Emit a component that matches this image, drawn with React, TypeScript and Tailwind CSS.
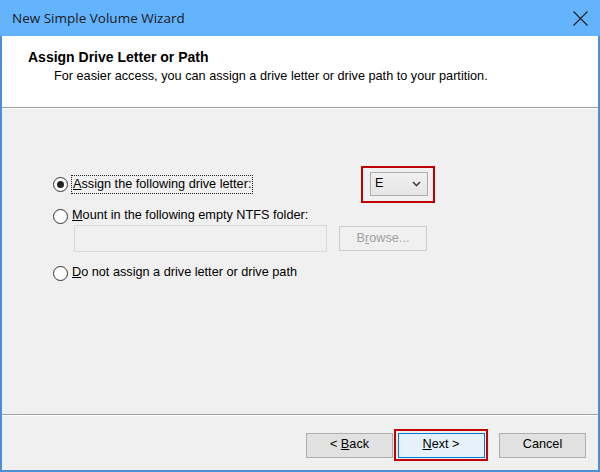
import React from "react";

const body = { fontFamily: '"Liberation Sans", Arial, sans-serif' };

function Radio({ checked }: { checked?: boolean }) {
  return (
    <span className="w-[15px] h-[15px] rounded-full border border-[#333] bg-white flex items-center justify-center shrink-0">
      {checked && <span className="w-[7px] h-[7px] rounded-full bg-[#222]" />}
    </span>
  );
}

function Btn({ children, primary }: { children: React.ReactNode; primary?: boolean }) {
  return (
    <div
      className={`w-[87px] h-[25px] flex items-center justify-center text-[12.7px] text-black border whitespace-pre ${
        primary ? "border-[#0078d7] bg-[#e5f1fb]" : "border-[#adadad] bg-[#e1e1e1]"
      }`}
    >
      {children}
    </div>
  );
}

export default function App() {
  return (
    <div className="w-[600px] h-[472px] flex flex-col bg-[#f0f0f0] border-x-2 border-b-2 border-[#4a8fd8]" style={body}>
      {/* title bar */}
      <div className="h-[36px] -mx-[2px] bg-[#63b4fd] flex items-center justify-between pl-[12px] pr-[12px] shrink-0">
        <span className="text-[13.5px] text-[#1a1a1a]" style={{ fontFamily: '"Open Sans", "Noto Sans", sans-serif' }}>
          New Simple Volume Wizard
        </span>
        <svg width="15" height="15" viewBox="0 0 15 15">
          <path d="M0.5 0.5 L14.5 14.5 M14.5 0.5 L0.5 14.5" stroke="#222" strokeWidth="1.2" />
        </svg>
      </div>

      {/* header */}
      <div className="h-[72px] bg-white border-b border-[#a0a0a0] shrink-0 pl-[26px] pt-[13px]">
        <div className="text-[14px] font-bold text-black leading-[16px]">Assign Drive Letter or Path</div>
        <div className="text-[12.7px] text-black leading-[16px] mt-[3px] pl-[26px]">
          For easier access, you can assign a drive letter or drive path to your partition.
        </div>
      </div>
      <div className="h-px bg-white shrink-0" />

      {/* body */}
      <div className="flex-1 pl-[51px] pt-[57px] text-[12.7px] text-black">
        <div className="flex items-center h-[37px]">
          <Radio checked />
          <span className="ml-[3px] px-px border border-dotted border-[#222] leading-[17px]">
            <u>A</u>ssign the following drive letter:
          </span>
          <div className="ml-auto mr-[163px] w-[74px] h-[37px] border-2 border-[#c00000] pl-[7px] pt-[4px]">
            <div className="w-[58px] h-[24px] border border-[#adadad] bg-gradient-to-b from-[#f0f0f0] to-[#e5e5e5] flex items-center justify-between pl-[4px] pr-[6px]">
              <span>E</span>
              <svg width="9" height="6" viewBox="0 0 9 6">
                <path d="M1 1 L4.5 4.5 L8 1" stroke="#444" strokeWidth="1.6" fill="none" />
              </svg>
            </div>
          </div>
        </div>
        <div className="flex items-center h-[16px] mt-[5px]">
          <Radio />
          <span className="ml-[4px]">
            <u>M</u>ount in the following empty NTFS folder:
          </span>
        </div>
        <div className="flex items-center mt-[1px] ml-[21px]">
          <div className="w-[253px] h-[27px] border border-[#d9d9d9] bg-[#f0f0f0]" />
          <div className="ml-[12px] w-[88px] h-[25px] border border-[#cccccc] bg-[#f0f0f0] flex items-center justify-center text-[#a0a0a0]">
            B<u>r</u>owse...
          </div>
        </div>
        <div className="flex items-center h-[16px] mt-[13px]">
          <Radio />
          <span className="ml-[4px]">
            <u>D</u>o not assign a drive letter or drive path
          </span>
        </div>
      </div>

      {/* footer */}
      <div className="h-[2px] border-t border-[#a0a0a0] bg-white shrink-0" />
      <div className="h-[54px] shrink-0 flex items-center justify-end pr-[12px] pt-[4px]">
        <Btn>
          {"< "}
          <u>B</u>ack
        </Btn>
        <div className="ml-px w-[94px] h-[32px] border-2 border-[#c00000] flex items-center justify-center">
          <Btn primary>
            <u>N</u>ext{" >"}
          </Btn>
        </div>
        <div className="ml-[11px]">
          <Btn>Cancel</Btn>
        </div>
      </div>
    </div>
  );
}
